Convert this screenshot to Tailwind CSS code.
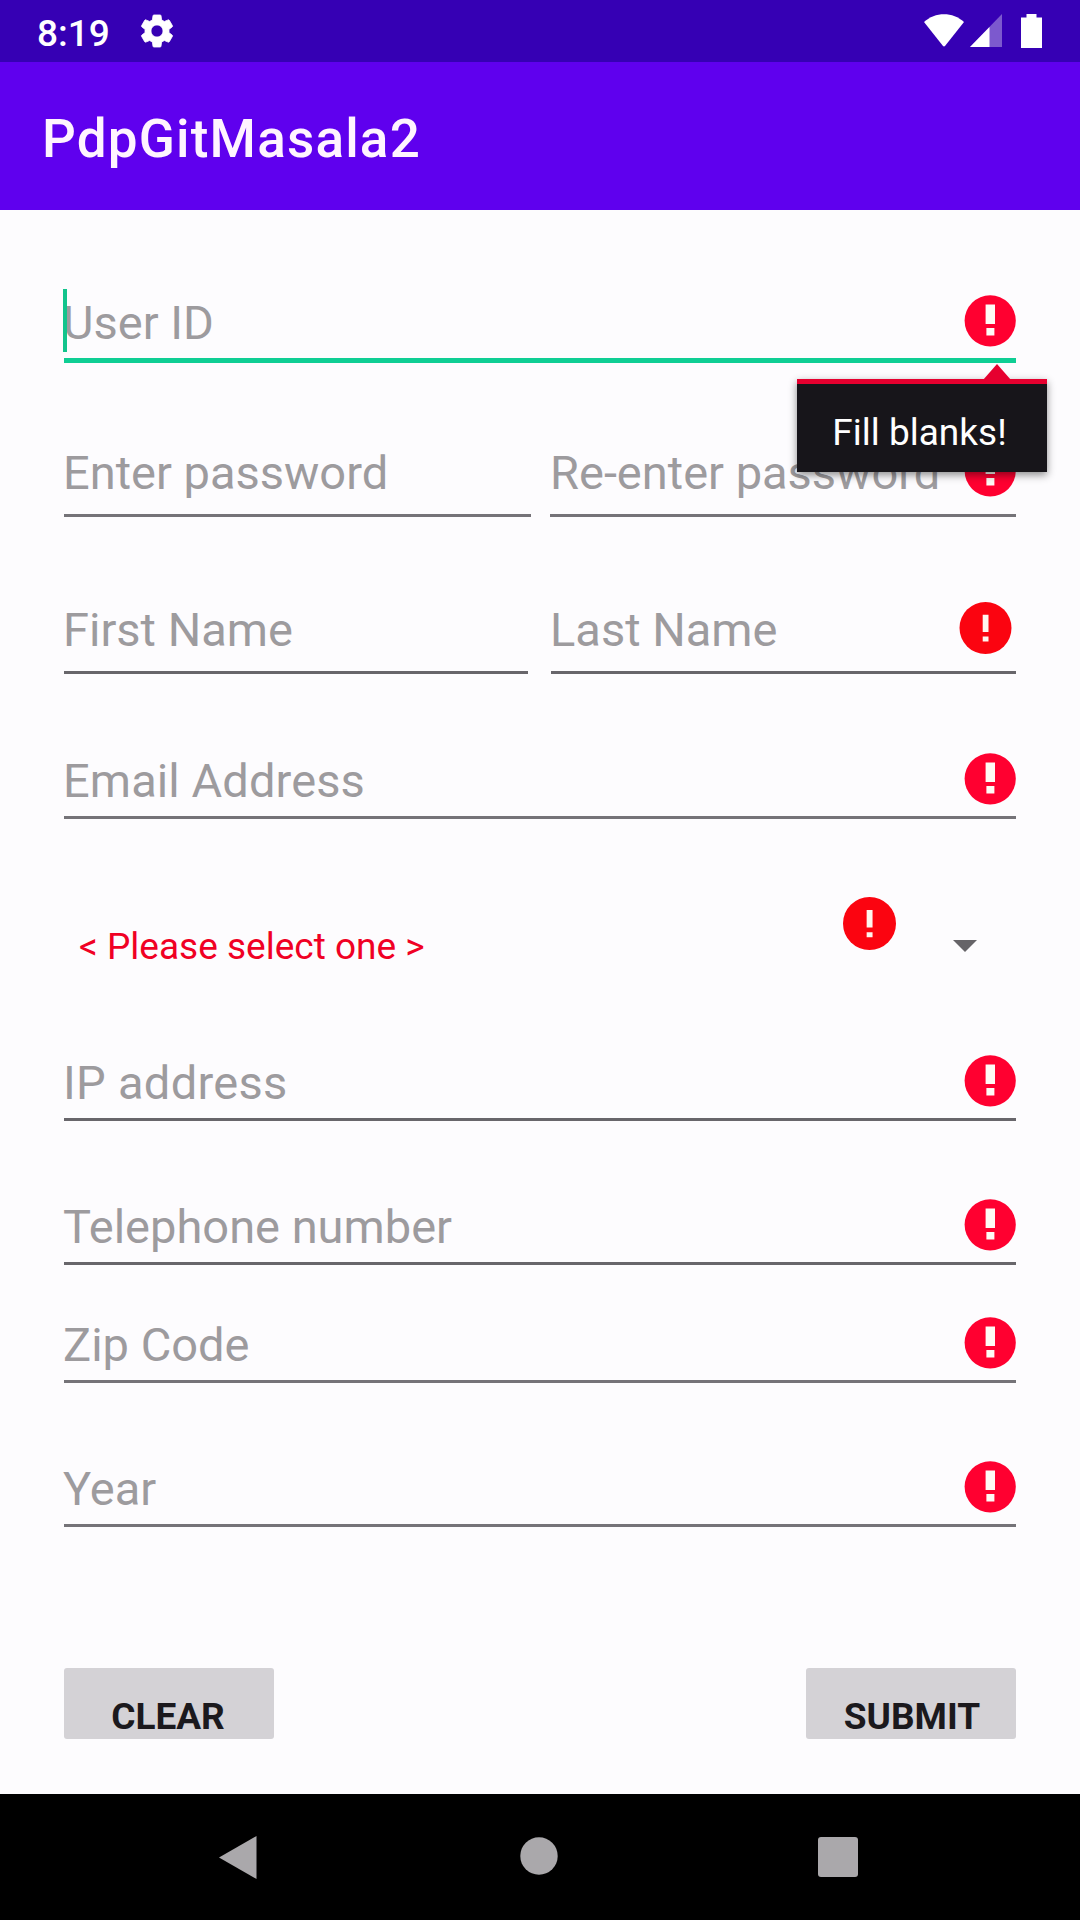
<!DOCTYPE html>
<html lang="en">
<head>
<meta charset="utf-8">
<title>PdpGitMasala2</title>
<script src="https://cdn.jsdelivr.net/npm/@tailwindcss/browser@4"></script>
</head>
<body class="w-[1080px] h-[1920px] flex flex-col overflow-hidden bg-[#fdfcfe] font-['Roboto',sans-serif] text-[47px] leading-[56px] text-[#9d9b9e]">

<svg class="hidden">
  <symbol id="error" viewBox="0 0 52 52">
    <circle cx="26.200" cy="25.800" r="25.600" fill="#ff0030"/>
    <path d="M21.600 9.500h9.400v19.600h-9.400zM22.400 33h8v7.600h-8z" fill="#fffaf5"/>
  </symbol>
  <symbol id="error-thin" viewBox="0 0 52 52">
    <circle cx="26" cy="26" r="26" fill="#fb0410"/>
    <path d="M23.2 12.7h5.8v17.3h-5.8zM23.2 34.6h5.8v4.8h-5.8z" fill="#fff5ee"/>
  </symbol>
</svg>

<!-- Status bar -->
<header class="h-[62px] shrink-0 bg-[#3600b4] text-white flex items-start justify-between pl-[37px] pr-[37px]">
  <div class="flex items-start">
    <span class="text-[37px] leading-[44px] font-medium mt-[12px] w-[100px]">8:19</span>
    <svg class="w-[40px] h-[40px] mt-[11px]" viewBox="0 0 24 24" fill="currentColor" stroke="currentColor" stroke-width=".5"><path d="M19.14 12.94c.04-.3.06-.61.06-.94 0-.32-.02-.64-.07-.94l2.03-1.58a.49.49 0 0 0 .12-.61l-1.92-3.32a.488.488 0 0 0-.59-.22l-2.39.96c-.5-.38-1.03-.7-1.62-.94l-.36-2.54a.484.484 0 0 0-.48-.41h-3.84c-.24 0-.43.17-.47.41l-.36 2.54c-.59.24-1.13.57-1.62.94l-2.39-.96c-.22-.08-.47 0-.59.22L2.74 8.87c-.12.21-.08.47.12.61l2.03 1.58c-.05.3-.09.63-.09.94s.02.64.07.94l-2.03 1.58a.49.49 0 0 0-.12.61l1.92 3.32c.12.22.37.29.59.22l2.39-.96c.5.38 1.03.7 1.62.94l.36 2.54c.05.24.24.41.48.41h3.84c.24 0 .44-.17.47-.41l.36-2.54c.59-.24 1.13-.56 1.62-.94l2.39.96c.22.08.47 0 .59-.22l1.92-3.32c.12-.22.07-.47-.12-.61l-2.01-1.58zM12 15.6c-1.98 0-3.6-1.62-3.6-3.6s1.62-3.6 3.6-3.6 3.6 1.62 3.6 3.6-1.62 3.6-3.6 3.6z"/></svg>
  </div>
  <div class="flex items-start pt-[13px]">
    <svg class="w-[40px] h-[35px] mr-[6px]" viewBox="0 0 40 35" fill="currentColor"><path d="M0 9C11-1.500 29-1.500 40 9L21.200 32.800q-1.200 1.200-2.400 0z"/></svg>
    <svg class="w-[32px] h-[35px] mr-[19px]" viewBox="0 0 32 35" fill="currentColor"><path d="M32 1v33H0z" opacity=".35"/><path d="M19.500 14v20H0z"/></svg>
    <svg class="w-[21px] h-[35px] mr-[1px]" viewBox="0 0 21 35" fill="currentColor"><path d="M5.500 1h10v3.500H21V35H0V4.500h5.500z"/></svg>
  </div>
</header>

<!-- App bar -->
<div class="h-[148px] shrink-0 bg-[#5f00ee] flex items-center pl-[42px]">
  <h1 class="text-[53px] leading-[62px] font-medium tracking-[1.2px] text-[#fff4ff] pt-[6px]">PdpGitMasala2</h1>
</div>

<!-- Form -->
<main class="h-[1584px] shrink-0 px-16 pt-[76px] flex flex-col">
  <div class="relative h-[77px] shrink-0 border-b-[5px] border-[#0fce94] flex items-center justify-between">
    <span class="pt-[2px] -ml-px">User ID</span>
    <svg class="w-[52px] h-[52px] mb-[3px]"><use href="#error"/></svg>
    <i class="absolute -left-px top-[3px] w-[4px] h-[63px] bg-[#12c48c]"></i>
    <!-- Error popup -->
    <div class="absolute z-10 top-[93px] left-[733px] w-[250px] h-[93px] bg-[#17151a] border-t-[5px] border-[#e6002f] shadow-[0_3px_8px_rgba(0,0,0,0.45)] flex justify-center pt-[27px] pr-[5px] text-[37px] leading-[44px] text-white">
      <svg class="absolute -top-[20px] left-[186px] w-[28px] h-[16px]" viewBox="0 0 28 16"><path d="M14 0l14 16H0z" fill="#e6002f"/></svg>
      <span>Fill blanks!</span>
    </div>
  </div>

  <div class="mt-[73px] flex shrink-0 gap-[19px]">
    <div class="w-[467px] h-[81px] pb-[6px] border-b-[3px] border-[#757378] flex items-center"><span class="pt-[2px] -ml-px">Enter password</span></div>
    <div class="w-[466px] h-[81px] pb-[6px] border-b-[3px] border-[#757378] flex items-center justify-between">
      <span class="pt-[2px] whitespace-nowrap">Re-enter password</span>
      <svg class="w-[52px] h-[52px] shrink-0 mb-[3px]"><use href="#error"/></svg>
    </div>
  </div>

  <div class="mt-[76px] flex shrink-0 gap-[23px]">
    <div class="w-[464px] h-[81px] pb-[6px] border-b-[3px] border-[#68666b] flex items-center"><span class="pt-[2px] -ml-px">First Name</span></div>
    <div class="w-[465px] h-[81px] pb-[6px] border-b-[3px] border-[#68666b] flex items-center justify-between">
      <span class="pt-[2px] -ml-px">Last Name</span>
      <svg class="w-[53px] h-[52px] mb-[3px] mr-1"><use href="#error-thin"/></svg>
    </div>
  </div>

  <div class="mt-[70px] h-[75px] shrink-0 border-b-[3px] border-[#757378] flex items-center justify-between">
    <span class="pt-[2px] -ml-px tracking-[0.1px]">Email Address</span>
    <svg class="w-[52px] h-[52px] mb-[3px]"><use href="#error"/></svg>
  </div>

  <div class="mt-[60px] mb-[33px] h-[134px] shrink-0 flex items-center pl-[15px] pr-[39px]">
    <span class="grow text-[37px] leading-[44px] text-[#f00024] pt-px">&lt; Please select one &gt;</span>
    <svg class="w-[53px] h-[53px] mb-[45px] mr-[57px]"><use href="#error-thin"/></svg>
    <svg class="w-[24px] h-[12px]" viewBox="0 0 24 12"><path d="M0 0h24L12 12z" fill="#666468"/></svg>
  </div>

  <div class="h-[75px] shrink-0 border-b-[3px] border-[#68666b] flex items-center justify-between">
    <span class="pt-[2px] -ml-px tracking-[0.3px]">IP address</span>
    <svg class="w-[52px] h-[52px] mb-[3px]"><use href="#error"/></svg>
  </div>
  <div class="mt-[69px] h-[75px] shrink-0 border-b-[3px] border-[#68666b] flex items-center justify-between">
    <span class="pt-[2px] -ml-px">Telephone number</span>
    <svg class="w-[52px] h-[52px] mb-[3px]"><use href="#error"/></svg>
  </div>
  <div class="mt-[43px] h-[75px] shrink-0 border-b-[3px] border-[#757378] flex items-center justify-between">
    <span class="pt-[2px] -ml-px">Zip Code</span>
    <svg class="w-[52px] h-[52px] mb-[3px]"><use href="#error"/></svg>
  </div>
  <div class="mt-[69px] h-[75px] shrink-0 border-b-[3px] border-[#757378] flex items-center justify-between">
    <span class="pt-[2px] -ml-px">Year</span>
    <svg class="w-[52px] h-[52px] mb-[3px]"><use href="#error"/></svg>
  </div>

  <div class="mt-[141px] flex shrink-0 justify-between text-[37px] leading-[44px] font-bold text-[#1b191d]">
    <button class="w-[210px] h-[71px] rounded-[3px] bg-[#d4d2d6] flex justify-center pt-[27px] pr-[2px]">CLEAR</button>
    <button class="w-[210px] h-[71px] rounded-[3px] bg-[#d4d2d6] flex justify-center pt-[27px] pl-[2px]">SUBMIT</button>
  </div>
</main>

<!-- Navigation bar -->
<nav class="h-[126px] shrink-0 bg-black flex items-center justify-between pl-[219px] pr-[222px] text-[#aaa8ab]">
  <svg class="w-[38px] h-[43px]" viewBox="0 0 38 43" fill="currentColor"><path d="M37.500 0v43L0 21.500z"/></svg>
  <svg class="w-[38px] h-[38px] ml-[3px] mb-[2px]" viewBox="0 0 38 38" fill="currentColor"><circle cx="19" cy="19" r="18.700"/></svg>
  <i class="w-[40px] h-[40px] rounded-[3px] bg-[#aaa8ab]"></i>
</nav>
</body>
</html>
